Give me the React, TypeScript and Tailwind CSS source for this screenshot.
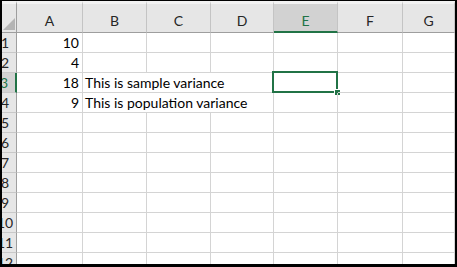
const cols = ['A', 'B', 'C', 'D', 'E', 'F', 'G'];
const rows = [1, 2, 3, 4, 5, 6, 7, 8, 9, 10, 11, 12];

const values: Record<number, { a?: string; b?: string }> = {
  1: { a: '10' },
  2: { a: '4' },
  3: { a: '18', b: 'This is sample variance' },
  4: { a: '9', b: 'This is population variance' },
};

function ColHeader({ label }: { label: string }) {
  const active = label === 'E';
  return (
    <div
      className={
        'flex justify-center border-t-[3px] border-t-[#f2f2f2] border-r border-r-[#c4c4c4] pt-[7px] leading-[19px] ' +
        (active
          ? 'bg-[#d2d2d2] border-b-2 border-b-[#217346] text-[#217346]'
          : 'bg-[#e6e6e6] border-b border-b-[#9e9e9e] text-[#262626]')
      }
    >
      {label}
    </div>
  );
}

function RowHeader({ n }: { n: number }) {
  const active = n === 3;
  return (
    <div
      className={
        'flex justify-end overflow-hidden border-b border-b-[#c8c8c8] leading-[19px] ' +
        (active
          ? 'bg-[#d2d2d2] border-r-2 border-r-[#217346] text-[#217346]'
          : 'bg-[#e6e6e6] border-r border-r-[#9e9e9e] text-[#262626]')
      }
    >
      <div className="w-[22px] shrink-0 text-center">{n}</div>
    </div>
  );
}

function Cell({ children, right, span3 }: { children?: React.ReactNode; right?: boolean; span3?: boolean }) {
  return (
    <div
      className={
        'relative border-r border-b border-[#d4d4d4] whitespace-nowrap leading-[19px] text-black ' +
        (right ? 'text-right pr-[3px] ' : 'pl-[2px] ') +
        (span3 ? 'col-span-3' : '')
      }
    >
      {children}
    </div>
  );
}

export default function App() {
  return (
    <div className="w-[457px] h-[267px] overflow-hidden bg-white border-l-2 border-r-2 border-t border-b-[3px] border-black font-['Lato','Liberation_Sans',sans-serif] text-[14px]">
      <div className="grid grid-cols-[15px_66px_64px_64px_63px_64px_65px_1fr] grid-rows-[32px] auto-rows-[20px]">
        <div className="flex items-end justify-end bg-[#e6e6e6] border-r border-b border-[#9e9e9e] pr-[1px] pb-[2px] border-t-[3px] border-t-[#f2f2f2]">
          <svg width="12" height="12" viewBox="0 0 12 12">
            <polygon points="12,0 12,12 0,12" fill="#b4b4b4" />
          </svg>
        </div>
        {cols.map((c) => (
          <ColHeader key={c} label={c} />
        ))}
        {rows.map((n) => {
          const v = values[n] || {};
          return [
            <RowHeader key={'h' + n} n={n} />,
            <Cell key={'a' + n} right>
              {v.a}
            </Cell>,
            v.b ? (
              <Cell key={'b' + n} span3>
                {v.b}
              </Cell>
            ) : (
              [<Cell key={'b' + n} />, <Cell key={'c' + n} />, <Cell key={'d' + n} />]
            ),
            <Cell key={'e' + n}>
              {n === 3 && (
                <>
                  <div className="absolute -left-[2px] -top-[2px] w-[66px] h-[22px] border-2 border-[#217346]" />
                  <div className="absolute left-[60px] top-[16px] w-[7px] h-[7px] bg-[#217346] border border-white" />
                </>
              )}
            </Cell>,
            <Cell key={'f' + n} />,
            <Cell key={'g' + n} />,
          ];
        })}
      </div>
    </div>
  );
}
